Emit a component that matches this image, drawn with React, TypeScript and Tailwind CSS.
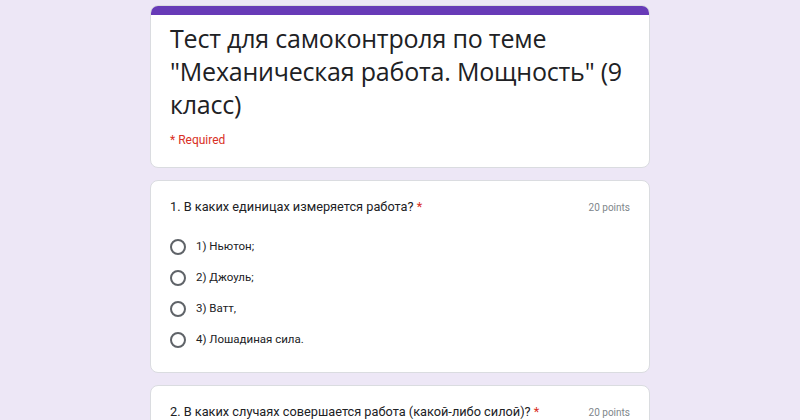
import React from "react";

const options = ["1) Ньютон;", "2) Джоуль;", "3) Ватт,", "4) Лошадиная сила."];

function Radio() {
  return <span className="w-[16px] h-[16px] rounded-full border-2 border-[#5f6368] shrink-0" />;
}

export default function App() {
  return (
    <div className="w-[800px] h-[420px] overflow-hidden bg-[#ede7f6] font-['Roboto',sans-serif]">
      <div className="w-[500px] mx-auto pt-[5px] flex flex-col gap-[12px]">
        <div className="bg-white rounded-[8px] border border-[#dadce0] overflow-hidden">
          <div className="h-[9px] bg-[#673ab7]" />
          <div className="px-[19px] pt-[7px] pb-[18px]">
            <h1 className="font-['Open_Sans',sans-serif] text-[25px] leading-[33px] text-[#202124] tracking-[-0.2px]">
              Тест для самоконтроля по теме "Механическая работа. Мощность" (9 класс)
            </h1>
            <div className="mt-[10px] text-[12px] text-[#d93025]">* Required</div>
          </div>
        </div>

        <div className="bg-white rounded-[8px] border border-[#dadce0] px-[19px] pt-[16px] pb-[23px]">
          <div className="flex justify-between items-center h-[20px]">
            <div className="text-[12.75px] text-[#202124]">
              1. В каких единицах измеряется работа? <span className="text-[#d93025]">*</span>
            </div>
            <div className="text-[10px] text-[#80868b]">20 points</div>
          </div>
          <div className="mt-[21px] flex flex-col gap-[13px]">
            {options.map((o) => (
              <div key={o} className="h-[18px] flex items-center gap-[10px]">
                <Radio />
                <span className="text-[11.5px] text-[#202124]">{o}</span>
              </div>
            ))}
          </div>
        </div>

        <div className="bg-white rounded-[8px] border border-[#dadce0] px-[19px] pt-[16px] pb-[24px]">
          <div className="flex justify-between items-center h-[20px]">
            <div className="text-[12.75px] text-[#202124]">
              2. В каких случаях совершается работа (какой-либо силой)? <span className="text-[#d93025]">*</span>
            </div>
            <div className="text-[10px] text-[#80868b]">20 points</div>
          </div>
        </div>
      </div>
    </div>
  );
}
